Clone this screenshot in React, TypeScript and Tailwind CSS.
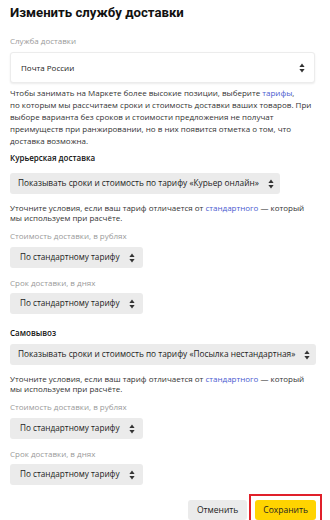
import React from "react";

const SortIcon = () => (
  <svg width="6" height="10" viewBox="0 0 6 10" className="shrink-0">
    <path d="M3 0.5 L5.6 4 H0.4 Z" fill="#333" />
    <path d="M3 9.5 L5.6 6 H0.4 Z" fill="#333" />
  </svg>
);

const GraySelect = ({ text, small }: { text: string; small?: boolean }) => (
  <div
    className={`h-[21px] w-fit whitespace-nowrap rounded-[3px] bg-[#ebebeb] flex items-center ${
      small ? "pl-[10px] pr-[8px] gap-[9px] text-[8.2px]" : "pl-[8px] pr-[6px] gap-[9px] text-[8.3px]"
    } text-[#222]`}
  >
    <span>{text}</span>
    <SortIcon />
  </div>
);

const Label = ({ children }: { children: React.ReactNode }) => (
  <div className="text-[8px] leading-[10px] text-[#9a9a9a]">{children}</div>
);

const Note = () => (
  <div className="text-[8px] leading-[10px] text-[#333]">
    Уточните условия, если ваш тариф отличается от{" "}
    <span className="text-[#4a5bd0]">стандартного</span> — который
    <br />
    мы используем при расчёте.
  </div>
);

export default function App() {
  return (
    <div
      className="w-[330px] h-[520px] bg-white overflow-hidden pl-[10px] relative"
      style={{ fontFamily: '"Open Sans", "Noto Sans", sans-serif' }}
    >
      <div
        className="pt-[3px] text-[13.2px] leading-[20px] font-bold text-[#111]"
        style={{ fontFamily: 'Roboto, "Open Sans", sans-serif' }}
      >
        Изменить службу доставки
      </div>
      <div className="mt-[13px]">
        <Label>Служба доставки</Label>
      </div>
      <div className="mt-[6px] w-[305px] h-[31px] rounded-[3px] bg-white border border-[#ececec] shadow-[0_1px_2px_rgba(0,0,0,0.08)] flex items-center justify-between pl-[10px] pr-[9px] text-[8px] text-[#222]">
        <span>Почта России</span>
        <SortIcon />
      </div>
      <div className="mt-[4px] text-[8px] leading-[12px] text-[#333] w-[310px]">
        Чтобы занимать на Маркете более высокие позиции, выберите{" "}
        <span className="text-[#4a5bd0]">тарифы</span>,
        <br />
        по которым мы рассчитаем сроки и стоимость доставки ваших товаров. При
        <br />
        выборе варианта без сроков и стоимости предложения не получат
        <br />
        преимуществ при ранжировании, но в них появится отметка о том, что
        <br />
        доставка возможна.
      </div>
      <div className="mt-[5px] text-[8px] leading-[12px] font-semibold text-[#111]">
        Курьерская доставка
      </div>
      <div className="mt-[9px]">
        <GraySelect text="Показывать сроки и стоимость по тарифу «Курьер онлайн»" />
      </div>
      <div className="mt-[9px]">
        <Note />
      </div>
      <div className="mt-[8px]">
        <Label>Стоимость доставки, в рублях</Label>
      </div>
      <div className="mt-[6px]">
        <GraySelect small text="По стандартному тарифу" />
      </div>
      <div className="mt-[10px]">
        <Label>Срок доставки, в днях</Label>
      </div>
      <div className="mt-[5px]">
        <GraySelect small text="По стандартному тарифу" />
      </div>
      <div className="mt-[13px] text-[8px] leading-[12px] font-semibold text-[#111]">
        Самовывоз
      </div>
      <div className="mt-[5px]">
        <GraySelect text="Показывать сроки и стоимость по тарифу «Посылка нестандартная»" />
      </div>
      <div className="mt-[9px]">
        <Note />
      </div>
      <div className="mt-[8px]">
        <Label>Стоимость доставки, в рублях</Label>
      </div>
      <div className="mt-[6px]">
        <GraySelect small text="По стандартному тарифу" />
      </div>
      <div className="mt-[10px]">
        <Label>Срок доставки, в днях</Label>
      </div>
      <div className="mt-[5px]">
        <GraySelect small text="По стандартному тарифу" />
      </div>
      <div className="mt-[9px] w-[312px] flex justify-end items-center gap-[2px]">
        <div className="h-[20px] px-[9px] rounded-[3px] bg-[#ebebeb] flex items-center text-[8.5px] text-[#222]">
          Отменить
        </div>
        <div className="border-[2px] border-[#e0202a] p-[4px]">
          <div className="h-[20px] px-[8px] rounded-[3px] bg-[#ffd400] flex items-center text-[8.5px] text-[#222]">
            Сохранить
          </div>
        </div>
      </div>
    </div>
  );
}
